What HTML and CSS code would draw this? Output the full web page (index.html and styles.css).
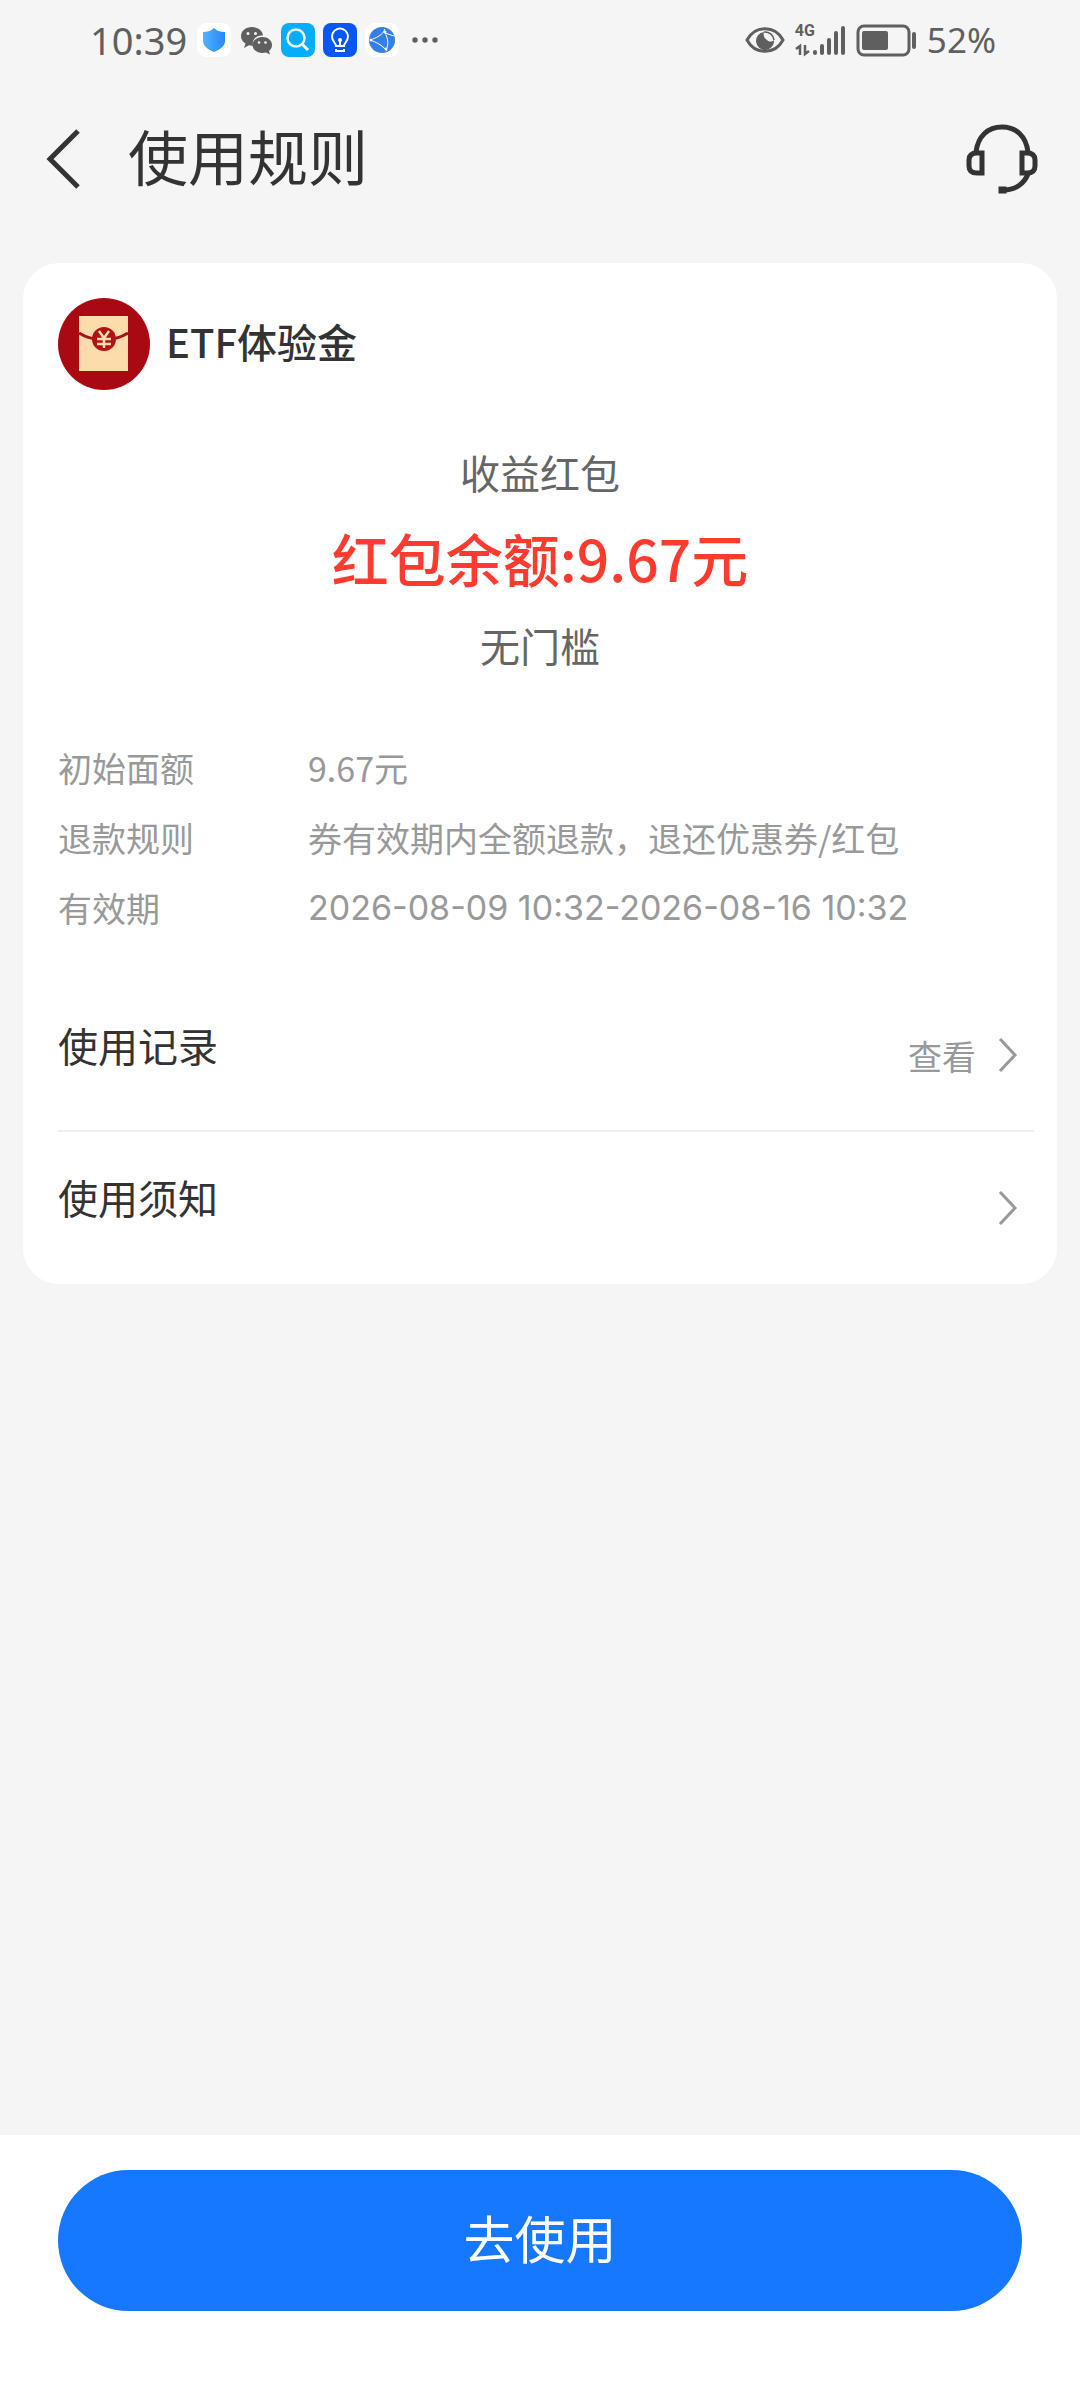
FILE: index.html
```html
<!DOCTYPE html>
<html lang="zh-CN">
<head>
  <meta charset="UTF-8">
  <meta name="viewport" content="width=device-width, initial-scale=1.0">
  <title>使用规则</title>
  <link rel="stylesheet" href="styles.css">
</head>
<body>

<div class="status-bar">
  <div class="status-left">
    <span class="status-text">10:39</span>
    <div class="status-icons">
      <svg width="34" height="34" viewBox="0 0 34 34">
        <defs>
          <linearGradient id="shield" x1="0" x2="1" y1="0" y2="0">
            <stop offset="0" stop-color="#4fb4ff"/>
            <stop offset="1" stop-color="#2a86f5"/>
          </linearGradient>
        </defs>
        <rect width="34" height="34" rx="9" fill="#fff"/>
        <path d="M17 5c3 3 7 4 11 4v9c0 5-5 8.5-11 11-6-2.5-11-6-11-11V9c4 0 8-1 11-4z" fill="url(#shield)"/>
      </svg>
      <svg width="34" height="34" viewBox="0 0 34 34">
        <path d="M13 4C6.500 4 2 8 2 13c0 3 1.500 5.500 4.500 7.500L5 25l5-2.700c1 .3 2 .4 3 .4h1C12.500 17 17 12 24 12.500 23.500 7.500 19 4 13 4z" fill="#5f5f5f"/>
        <path d="M23.500 14c-5.500 0-10 3.300-10 8s4.500 8 10 8c1.200 0 2.300-.2 3.400-.5L31 31.500l-1-3.600c2-1.400 3-3.500 3-5.900 0-4.700-4.300-8-9.500-8z" fill="#5f5f5f"/>
        <circle cx="9" cy="10.5" r="1.5" fill="#f5f5f5"/><circle cx="16.5" cy="10.5" r="1.5" fill="#f5f5f5"/>
        <circle cx="20" cy="19.5" r="1.3" fill="#f5f5f5"/><circle cx="26.5" cy="19.5" r="1.3" fill="#f5f5f5"/>
      </svg>
      <svg width="34" height="34" viewBox="0 0 34 34">
        <rect width="34" height="34" rx="8" fill="#05aefc"/>
        <circle cx="15" cy="15" r="8.5" fill="none" stroke="#fff" stroke-width="2.5"/>
        <path d="M21 21l6 6" stroke="#fff" stroke-width="3"/>
      </svg>
      <svg width="34" height="34" viewBox="0 0 34 34">
        <rect width="34" height="34" rx="8" fill="#0757f5"/>
        <path d="M13 23c0-3-4-4.500-4-9.500a8 8 0 0 1 16 0c0 5-4 6.500-4 9.500z" fill="none" stroke="#fff" stroke-width="2"/>
        <path d="M17 17v6M13 26v2h8v-2" fill="none" stroke="#fff" stroke-width="2"/>
        <circle cx="17" cy="17" r="2" fill="#fff"/>
      </svg>
      <svg width="34" height="34" viewBox="0 0 34 34">
        <rect width="34" height="34" rx="9" fill="#fff"/>
        <circle cx="17" cy="17" r="13" fill="#347fe8"/>
        <path d="M5 17C11 15 18 12 20 6M5 17c6 2 12 5 17 11M20 10c3 5 4 12 1 17M20 10c3 1 6 2 9 3" fill="none" stroke="#fff" stroke-width="1"/>
        <circle cx="6" cy="17" r="1.5" fill="#fff"/><circle cx="20" cy="9" r="1.5" fill="#fff"/><circle cx="21" cy="26" r="1.5" fill="#fff"/>
      </svg>
      <svg width="34" height="34" viewBox="0 0 34 34" fill="#5f5f5f">
        <circle cx="8" cy="17" r="2.7"/><circle cx="18" cy="17" r="2.7"/><circle cx="28" cy="17" r="2.7"/>
      </svg>
    </div>
  </div>
  <div class="status-right">
    <svg width="40" height="34" viewBox="0 0 40 34">
      <path d="M2 17C10 2 30 2 38 17 30 32 10 32 2 17z" fill="none" stroke="#5f5f5f" stroke-width="3"/>
      <path d="M19 9a9 9 0 1 0 10 8c-2 2-5 2-7 0-3-2-4-5-3-8z" fill="#5f5f5f"/>
      <path d="M19 9a9 9 0 0 1 10 8" fill="none" stroke="#5f5f5f" stroke-width="1.5"/>
    </svg>
    <div class="signal">
      <span class="network">4G</span>
      <svg width="50" height="34" viewBox="0 0 50 34">
        <g stroke="#5f5f5f" stroke-width="4" stroke-linecap="round">
          <path d="M20 29v1M27 23v7M34 17v13M41 10v20M48 5v25"/>
        </g>
        <path d="M1 26l4-3v9M10 22v9l4-3" fill="none" stroke="#5f5f5f" stroke-width="2.5"/>
      </svg>
    </div>
    <svg width="62" height="34" viewBox="0 0 62 34">
      <rect x="3" y="3" width="51" height="29" rx="6" fill="none" stroke="#5f5f5f" stroke-width="3"/>
      <rect x="7" y="8" width="26" height="19" rx="2" fill="#5f5f5f"/>
      <rect x="57" y="9" width="4" height="17" rx="2" fill="#5f5f5f"/>
    </svg>
    <span class="status-text status-battery">52%</span>
  </div>
</div>

<header class="header">
  <button class="icon-button" aria-label="返回">
    <svg width="40" height="60" viewBox="0 0 40 60">
      <path d="M37 2L9 30l28 28" fill="none" stroke="#333" stroke-width="5"/>
    </svg>
  </button>
  <h1 class="title">使用规则</h1>
  <button class="icon-button" aria-label="客服">
    <svg width="76" height="72" viewBox="0 0 76 72" fill="none" stroke="#333" stroke-width="5">
      <path d="M12 29C14 13 24 4 38 4s24 9 26 25"/>
      <path d="M18 30h-5c-6 0-8 3-8 7v6c0 4 2 7 8 7h5z"/>
      <path d="M58 30h5c6 0 8 3 8 7v6c0 4-2 7-8 7h-5z"/>
      <path d="M64 51c-4 10-13 16-24 16"/>
      <rect x="37" y="66" width="3" height="2"/>
    </svg>
  </button>
</header>

<main class="card">
  <div class="coupon-head">
    <svg width="92" height="92" viewBox="0 0 92 92">
      <circle cx="46" cy="46" r="46" fill="#a90a12"/>
      <rect x="21" y="18" width="49" height="55" fill="#fddcab"/>
      <path d="M21 35c14 9 35 9 49 0" fill="none" stroke="#a31515" stroke-width="3"/>
      <circle cx="46" cy="41" r="12" fill="#b11218"/>
      <path d="M41 33l5 7 5-7M46 40v10M39 41h14M39 46h14" fill="none" stroke="#fddcab" stroke-width="2.5"/>
    </svg>
    <h2 class="coupon-name">ETF体验金</h2>
  </div>

  <div class="summary">
    <p class="summary-text">收益红包</p>
    <p class="amount">红包余额:9.67元</p>
    <p class="summary-text">无门槛</p>
  </div>

  <dl class="details">
    <dt>初始面额</dt>
    <dd>9.67元</dd>
    <dt>退款规则</dt>
    <dd>券有效期内全额退款，退还优惠券/红包</dd>
    <dt>有效期</dt>
    <dd class="date">2026-08-09 10:32-2026-08-16 10:32</dd>
  </dl>

  <nav class="links">
    <a class="link-row" href="#records">
      <span class="link-name">使用记录</span>
      <span class="link-more">查看
        <svg width="20" height="34" viewBox="0 0 20 34">
          <path d="M2 1l15 16L2 33" fill="none" stroke="#999" stroke-width="3"/>
        </svg>
      </span>
    </a>
    <a class="link-row" href="#notice">
      <span class="link-name">使用须知</span>
      <span class="link-more">
        <svg width="20" height="34" viewBox="0 0 20 34">
          <path d="M2 1l15 16L2 33" fill="none" stroke="#999" stroke-width="3"/>
        </svg>
      </span>
    </a>
  </nav>
</main>

<footer class="footer">
  <button class="use-button">去使用</button>
</footer>

</body>
</html>
```
FILE: styles.css
```css
* {
  box-sizing: border-box;
}
body {
  display: flex;
  flex-direction: column;
  min-height: 100vh;
  margin: 0;
  background-color: #f5f5f5;
  color: #333;
  font-family: "Noto Sans CJK SC", sans-serif;
}
h1, h2, p, dl, dd {
  margin: 0;
}
svg {
  display: block;
  flex-shrink: 0;
}
button {
  border: 0;
  font-family: inherit;
  cursor: pointer;
}

/* 状态栏 */
.status-bar {
  display: flex;
  justify-content: space-between;
  align-items: center;
  height: 80px;
  padding: 0 84px 0 90px;
}
.status-left, .status-right {
  display: flex;
  align-items: center;
  gap: 10px;
}
.status-icons {
  display: flex;
  gap: 8px;
}
.status-text {
  color: #5f5f5f;
  font-family: "Noto Sans", sans-serif;
  font-size: 38px;
  line-height: 40px;
}
.status-battery {
  font-size: 35px;
}
.signal {
  position: relative;
}
.network {
  position: absolute;
  top: -2px;
  left: 0;
  color: #5f5f5f;
  font-family: Roboto, sans-serif;
  font-size: 16px;
  font-weight: 700;
  line-height: 20px;
}

/* 顶部标题 */
.header {
  display: flex;
  align-items: center;
  height: 158px;
  padding: 0 40px 0 41px;
}
.icon-button {
  padding: 0;
  background: none;
}
.title {
  flex: 1;
  margin-left: 47px;
  padding-bottom: 8px;
  font-size: 60px;
  font-weight: 400;
  line-height: 80px;
}

/* 红包卡片 */
.card {
  margin: 25px 23px 0;
  padding: 35px 23px 0 35px;
  border-radius: 36px;
  background-color: #fff;
}
.coupon-head {
  display: flex;
  align-items: center;
  gap: 16px;
}
.coupon-name {
  padding-bottom: 6px;
  font-size: 40px;
  font-weight: 500;
  line-height: 60px;
}
.summary {
  padding: 52px 12px 0 0;
  text-align: center;
}
.summary-text {
  color: #666;
  font-size: 40px;
  line-height: 60px;
}
.amount {
  margin: 11px 0 14px;
  color: #ff3b30;
  font-size: 57px;
  font-weight: 500;
  line-height: 88px;
}
.details {
  display: grid;
  grid-template-columns: 250px 1fr;
  margin-top: 58px;
  color: #999;
  font-size: 34px;
  line-height: 70px;
}
.date {
  font-family: Inter, sans-serif;
}
.links {
  margin-top: 37px;
}
.link-row {
  display: flex;
  justify-content: space-between;
  height: 152px;
  padding-right: 16px;
  color: #333;
  text-decoration: none;
}
.link-row:first-child {
  border-bottom: 2px solid #eee;
}
.link-name {
  padding-top: 35px;
  font-size: 40px;
  line-height: 60px;
}
.link-more {
  display: flex;
  align-items: center;
  gap: 22px;
  color: #999;
  font-size: 34px;
}

/* 底部按钮 */
.footer {
  margin-top: auto;
  padding: 35px 58px 89px;
  background-color: #fff;
}
.use-button {
  display: block;
  width: 100%;
  height: 141px;
  padding: 0 0 8px;
  border-radius: 71px;
  background-color: #1677ff;
  color: #fff;
  font-size: 51px;
}
```
